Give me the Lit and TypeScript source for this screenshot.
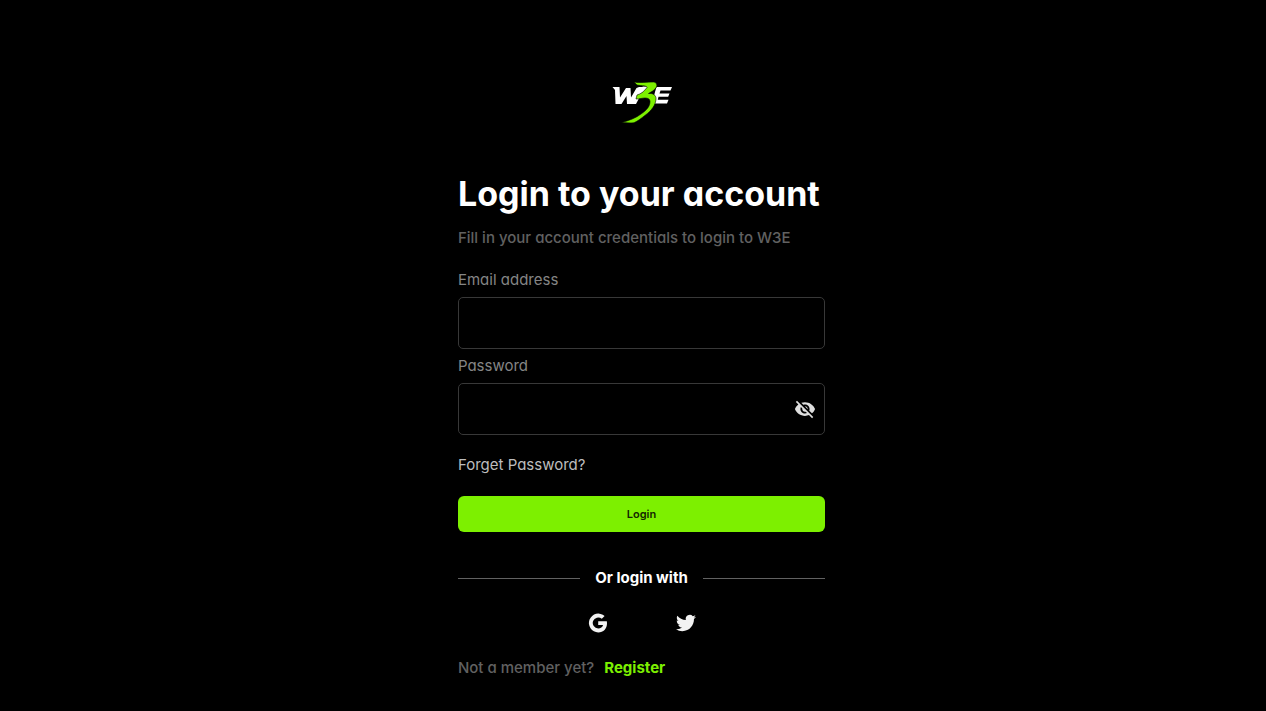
import { LitElement, html, css } from "lit";
import { customElement, state } from "lit/decorators.js";

@customElement("app-root")
export class AppRoot extends LitElement {
  @state() private reveal = false;

  static styles = css`
    :host {
      display: flex;
      justify-content: center;
      box-sizing: border-box;
      min-height: 100vh;
      padding: 82px 0 32px 17px;
      background: #000;
      color: #fff;
      font-family: Inter, "Liberation Sans", sans-serif;
      font-feature-settings: "cv11", "ss03";
      font-size: 15px;
      line-height: 20px;
    }
    * {
      box-sizing: border-box;
    }
    main {
      display: flex;
      flex-direction: column;
      width: 29vw;
      min-width: 367px;
    }
    .logo {
      align-self: center;
      width: 60px;
      height: 42px;
    }
    h1 {
      margin: 50px 0 0;
      font-size: 34px;
      line-height: 40px;
      font-weight: 700;
      white-space: nowrap;
    }
    .intro {
      margin: 14px 0 0;
      color: #616161;
      font-weight: 500;
    }
    form {
      display: flex;
      flex-direction: column;
      margin-top: 22px;
    }
    label {
      color: #858585;
    }
    .box {
      display: flex;
      align-items: center;
      height: 52px;
      margin: 7px 0 7px;
      border: 1px solid #383838;
      border-radius: 5px;
    }
    .box:focus-within {
      border-color: #7df000;
    }
    input {
      flex: 1;
      min-width: 0;
      height: 100%;
      padding: 0 12px;
      border: 0;
      outline: 0;
      background: transparent;
      color: #fff;
      font: inherit;
    }
    button {
      border: 0;
      font: inherit;
      cursor: pointer;
    }
    .eye {
      display: flex;
      margin-right: 8px;
      padding: 0;
      background: none;
    }
    .eye svg {
      width: 22px;
      height: 22px;
      fill: #dedede;
    }
    a {
      text-decoration: none;
    }
    .forgot {
      align-self: flex-start;
      margin-top: 13px;
      color: #bdbdbd;
    }
    .submit {
      height: 36px;
      margin-top: 21px;
      border-radius: 6px;
      background: #7df000;
      color: #142600;
      font-size: 11px;
      font-weight: 600;
      font-feature-settings: inherit;
    }
    .divider {
      display: flex;
      align-items: center;
      gap: 15px;
      margin-top: 36px;
      font-weight: 700;
    }
    .divider::before,
    .divider::after {
      content: "";
      flex: 1;
      height: 1px;
      background: #626262;
    }
    .social {
      display: flex;
      justify-content: center;
      gap: 68px;
      margin-top: 25px;
    }
    .social a {
      display: flex;
    }
    .social svg {
      width: 20px;
      height: 20px;
      fill: #f2f2f2;
    }
    .join {
      display: flex;
      gap: 10px;
      margin: 25px 0 0;
      color: #616161;
      font-weight: 500;
    }
    .join a {
      color: #7df000;
      font-weight: 700;
    }
  `;

  render() {
    return html`
      <main>
        <svg class="logo" viewBox="0 0 60 42" role="img" aria-label="W3E">
          <g fill="#fff">
            <path d="M0.500 5H7.500L8 15.500L14 6H18.500L19 15.500L24.500 6L27 5H33L24 22H15L14.500 14L9.500 22H3.500L3 8Z" />
            <path d="M27 7L31 4.500H36V7L32 10L27.500 11Z" />
            <path d="M44.500 5H60L58.500 8.500H48.500L47.500 11.500H57.500L56.200 14.800H46.500L45.800 17.800H56.500L55 21.500H40L43 10Z" />
          </g>
          <path
            fill="#7df000"
            stroke="#000"
            stroke-width="0.6"
            d="M22 0C27 1.200 35 0 42 0C44.500 0.500 45.500 3 44.500 5C42.500 8.500 39 10 36.500 11.500C40.500 11 44 13 44 16.500C44 23 39 29 33.500 33C29 36.500 26 39 22 40.700C18 41.200 14 40.700 9.500 40.500C17 38.500 24 36 29 32C35 28 38 24 38 19.500C38 17 36 16 33 16C30 16 28 17 24 17L25 13C29 12 32.500 9 35 5.500C35 3.500 30 4 25 3Z"
          />
        </svg>
        <h1>Login to your account</h1>
        <p class="intro">Fill in your account credentials to login to W3E</p>
        <form @submit=${(e: Event) => e.preventDefault()}>
          <label for="email">Email address</label>
          <div class="box"><input id="email" type="email" autocomplete="email" /></div>
          <label for="password">Password</label>
          <div class="box">
            <input id="password" type=${this.reveal ? "text" : "password"} autocomplete="current-password" />
            <button
              class="eye"
              type="button"
              aria-label="Toggle password visibility"
              @click=${() => (this.reveal = !this.reveal)}
            >
              <svg viewBox="0 0 24 24">
                <path
                  d="M12 7c2.760 0 5 2.240 5 5 0 .65-.13 1.260-.36 1.830l2.920 2.920c1.510-1.260 2.700-2.890 3.430-4.750-1.730-4.390-6-7.500-11-7.500-1.400 0-2.740.25-3.980.7l2.160 2.160C10.740 7.130 11.350 7 12 7zM2 4.270l2.280 2.280.46.46C3.080 8.300 1.780 10.020 1 12c1.730 4.390 6 7.500 11 7.500 1.550 0 3.030-.3 4.380-.84l.42.42L19.730 22 21 20.730 3.270 3 2 4.270zM7.530 9.800l1.550 1.550c-.05.21-.08.43-.08.65 0 1.660 1.340 3 3 3 .22 0 .44-.03.65-.08l1.550 1.550c-.67.33-1.410.53-2.200.53-2.760 0-5-2.240-5-5 0-.79.2-1.530.53-2.200zm4.310-.78l3.150 3.150.02-.16c0-1.660-1.340-3-3-3l-.17.01z"
                />
              </svg>
            </button>
          </div>
          <a class="forgot" href="#forgot">Forget Password?</a>
          <button class="submit" type="submit">Login</button>
        </form>
        <div class="divider">Or login with</div>
        <div class="social">
          <a href="#google" aria-label="Google">
            <svg viewBox="0 0 20 20">
              <path
                d="M18.800 8.300H10.200V12H15.100C14.500 14 12.700 15.500 10.200 15.500A5.500 5.500 0 1 1 13.800 5.800L16.600 3A9.400 9.400 0 1 0 10.200 19.400C15.500 19.400 19 15.700 19 10.200C19 9.500 18.900 8.900 18.800 8.300Z"
              />
            </svg>
          </a>
          <a href="#twitter" aria-label="Twitter">
            <svg viewBox="0 0 24 24">
              <path
                d="M23.953 4.570a10 10 0 01-2.825.775 4.958 4.958 0 002.163-2.723c-.951.555-2.005.959-3.127 1.184a4.920 4.920 0 00-8.384 4.482C7.690 8.095 4.067 6.130 1.640 3.162a4.822 4.822 0 00-.666 2.475c0 1.710.87 3.213 2.188 4.096a4.904 4.904 0 01-2.228-.616v.06a4.923 4.923 0 003.946 4.827 4.996 4.996 0 01-2.212.085 4.936 4.936 0 004.604 3.417 9.867 9.867 0 01-6.102 2.105c-.39 0-.779-.023-1.170-.067a13.995 13.995 0 007.557 2.209c9.053 0 13.998-7.496 13.998-13.985 0-.21 0-.42-.015-.63A9.935 9.935 0 0024 4.590z"
              />
            </svg>
          </a>
        </div>
        <p class="join">Not a member yet? <a href="#register">Register</a></p>
      </main>
    `;
  }
}
